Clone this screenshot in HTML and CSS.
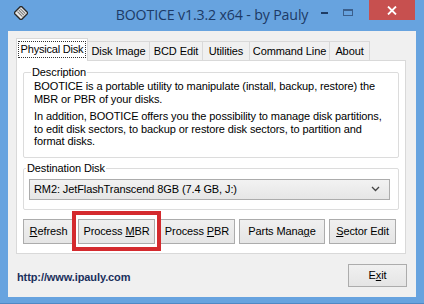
FILE: index.html
```html
<!DOCTYPE html>
<html>
<head>
<meta charset="utf-8">
<link rel="stylesheet" href="styles.css">
</head>
<body>
<div class="window">
  <div class="titlebar">
    <div class="tb-left">
      <svg class="app-icon" width="14" height="14" viewBox="0 0 14 14">
        <g transform="rotate(45 7 7)">
          <rect x="2" y="2" width="10" height="10" fill="#e8e8e8" stroke="#2a2a2a" stroke-width="1.4"/>
          <line x1="3.5" y1="4.5" x2="10.5" y2="4.5" stroke="#777" stroke-width="1"/>
          <line x1="3.5" y1="6.5" x2="10.5" y2="6.5" stroke="#777" stroke-width="1"/>
          <line x1="3.5" y1="8.5" x2="10.5" y2="8.5" stroke="#777" stroke-width="1"/>
        </g>
      </svg>
    </div>
    <div class="title">BOOTICE v1.3.2 x64 - by Pauly</div>
    <div class="tb-right">
      <span class="ctl min"><span class="dash"></span></span>
      <span class="ctl max"><span class="sq"></span></span>
      <span class="ctl close">
        <svg width="10" height="9" viewBox="0 0 10 9"><path d="M1 0.5 L9 8.5 M9 0.5 L1 8.5" stroke="#fff" stroke-width="1.8"/></svg>
      </span>
    </div>
  </div>
  <div class="client">
    <div class="tabs">
      <div class="tab active t-phys"><span class="focus">Physical Disk</span></div>
      <div class="tab t-img">Disk Image</div>
      <div class="tab t-bcd">BCD Edit</div>
      <div class="tab t-util">Utilities</div>
      <div class="tab t-cmd">Command Line</div>
      <div class="tab t-about">About</div>
    </div>
    <div class="panel">
      <fieldset class="group desc">
        <legend>Description</legend>
        <p>BOOTICE is a portable utility to manipulate (install, backup, restore) the MBR or PBR of your disks.</p>
        <p>In addition, BOOTICE offers you the possibility to manage disk partitions, to edit disk sectors, to backup or restore disk sectors, to partition and format disks.</p>
      </fieldset>
      <fieldset class="group dest">
        <legend>Destination Disk</legend>
        <div class="combo">
          <span class="combo-text">RM2: JetFlashTranscend 8GB (7.4 GB, J:)</span>
          <svg class="chev" width="9" height="6" viewBox="0 0 9 6"><path d="M1 1 L4.5 4.5 L8 1" fill="none" stroke="#444" stroke-width="1.3"/></svg>
        </div>
      </fieldset>
      <div class="buttons">
        <button class="btn w-refresh"><u>R</u>efresh</button>
        <span class="highlight"><button class="btn w-mbr">Process <u>M</u>BR</button></span>
        <button class="btn w-pbr">Process <u>P</u>BR</button>
        <button class="btn w-parts">Parts Mana<u>g</u>e</button>
        <button class="btn w-sector"><u>S</u>ector Edit</button>
      </div>
    </div>
    <div class="footer">
      <span class="url">http://www.ipauly.com</span>
      <button class="btn exit">E<u>x</u>it</button>
    </div>
  </div>
</div>
</body>
</html>
```

FILE: styles.css
```css
* { box-sizing: border-box; }
html, body { margin: 0; padding: 0; }
body {
  width: 424px;
  height: 304px;
  overflow: hidden;
  background: #67a3df;
  font-family: "Liberation Sans", Arial, sans-serif;
  font-size: 11px;
  letter-spacing: -0.1px;
  color: #000;
}
.window {
  width: 424px;
  height: 304px;
  background: #67a3df;
  border-bottom: 1px solid #4f88c4;
  display: flex;
  flex-direction: column;
  padding: 0 8px 6px 8px;
}
.titlebar {
  height: 31px;
  margin: 0 -8px;
  display: grid;
  grid-template-columns: 1fr auto 1fr;
  align-items: start;
}
.tb-left { padding: 6px 0 0 14px; }
.app-icon { display: block; }
.title {
  font-family: "Open Sans", "Noto Sans", sans-serif;
  font-size: 14.2px;
  color: #1c3a66;
  padding-top: 5px;
  letter-spacing: -0.15px;
}
.tb-right {
  display: flex;
  justify-content: flex-end;
  align-items: flex-start;
  padding-right: 9px;
}
.ctl { display: flex; align-items: center; justify-content: center; height: 20px; }
.min { width: 21px; }
.min .dash { width: 7px; height: 2px; background: #1e3c64; margin-top: 6px; }
.max { width: 26px; }
.max .sq { width: 10px; height: 7px; border: 1px solid #3b5f8c; border-top-width: 2px; margin-top: 4px; }
.close { width: 46px; background: #c7504f; margin-left: 8px; }
.client {
  flex: 1;
  background: #f0f0f0;
  padding: 7px 10px 0 8px;
  display: flex;
  flex-direction: column;
}
.tabs {
  display: flex;
  align-items: flex-end;
  height: 22px;
  position: relative;
  z-index: 1;
}
.tab {
  height: 19px;
  padding: 0;
  text-align: center;
  border: 1px solid #d9d9d9;
  border-bottom: none;
  background: #f0f0f0;
  line-height: 18px;
  margin-left: -1px;
  white-space: nowrap;
}
.t-phys { width: 72px; }
.t-img { width: 63px; }
.t-bcd { width: 54px; }
.t-util { width: 48px; }
.t-cmd { width: 81px; }
.t-about { width: 41px; }
.tab.active {
  background: #fff;
  padding: 2px 1px 0 1px;
  margin-left: 0;
  margin-bottom: -1px;
  height: 23px;
  line-height: 15px;
  letter-spacing: -0.2px;
}
.tab.active .focus {
  display: block;
  border: 1px dotted #333;
  padding: 0;
}
.panel {
  background: #fff;
  border: 1px solid #d9d9d9;
  padding: 5px 6px 9px 6px;
  display: flex;
  flex-direction: column;
}
.group {
  border: 1px solid #dcdcdc;
  border-radius: 2px;
  margin: 0;
  min-width: 0;
}
.group legend {
  padding: 0 1px;
  margin-left: -3px;
  line-height: 13px;
  color: #000;
}
.desc { padding: 1px 8px 9px 10px; }
.desc p { margin: 0; line-height: 12.6px; }
.desc p + p { margin-top: 5px; }
.dest { margin-top: 4px; padding: 4px 8px 9px 5px; }
.combo {
  height: 21px;
  border: 1px solid #acacac;
  background: linear-gradient(#f2f2f2, #e6e6e6);
  display: flex;
  align-items: center;
  justify-content: space-between;
  padding: 0 9px 0 4px;
}
.buttons {
  margin-top: 9px;
  display: flex;
  gap: 4px;
}
.btn {
  font-family: "Liberation Sans", Arial, sans-serif;
  font-size: 11px;
  letter-spacing: -0.1px;
  color: #000;
  height: 25px;
  border: 1px solid #acacac;
  background: linear-gradient(#f0f0f0, #e5e5e5);
  padding: 0;
  margin: 0;
}
.w-refresh { width: 51px; }
.w-mbr { width: 77px; }
.w-pbr { width: 76px; }
.w-parts { width: 86px; }
.w-sector { width: 67px; }
.highlight { position: relative; display: inline-flex; }
.highlight::after {
  content: "";
  position: absolute;
  left: -6px; right: -6px; top: -8px; bottom: -7px;
  border: 4px solid #d42a2e;
}
.footer {
  flex: 1;
  display: flex;
  align-items: center;
  justify-content: space-between;
  padding: 0 0 0 1px;
  margin-right: -1px;
}
.url {
  font-weight: bold;
  color: #1a2f5c;
  font-size: 11px;
  padding-top: 4px;
}
.exit { width: 59px; height: 23px; }
```
